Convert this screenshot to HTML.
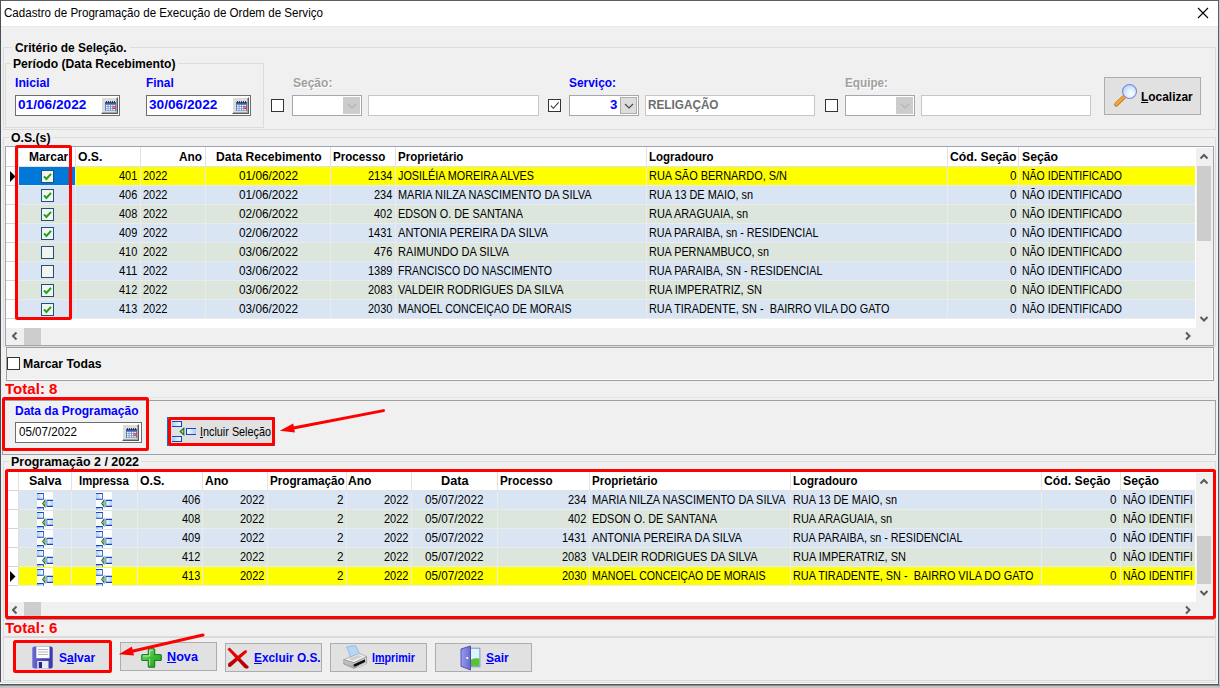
<!DOCTYPE html>
<html lang="pt-BR"><head><meta charset="utf-8"><title>Cadastro de Programação de Execução de Ordem de Serviço</title>
<style>
html,body{margin:0;padding:0}
body{width:1220px;height:688px;position:relative;overflow:hidden;background:#f0f0f0;font-family:"Liberation Sans",sans-serif;}
.a{position:absolute;box-sizing:border-box}
.t{position:absolute;white-space:pre;line-height:16px;transform-origin:0 0;color:#000}
.g{font-size:13px;font-weight:400}
.b{font-size:12px;font-weight:700}
.tt{font-size:12px;font-weight:400}
.T{font-size:14px;font-weight:700}
u{text-decoration:underline;text-underline-offset:1px}
svg{position:absolute;overflow:visible}
</style></head>
<body>
<div class="a" style="left:1px;top:1px;width:1217px;height:25px;background:#fff;"></div>
<div class="a" style="left:1px;top:26px;width:1217px;height:1px;background:#e9e9e9;"></div>
<div class="a" style="left:0px;top:0px;width:1219px;height:1px;background:#5d5d5d;"></div>
<div class="a" style="left:0px;top:0px;width:1px;height:685px;background:#4b5058;"></div>
<div class="a" style="left:1218px;top:0px;width:1px;height:685px;background:#5a5e66;"></div>
<div class="a" style="left:1219px;top:0px;width:1px;height:688px;background:#c4c8ce;"></div>
<div class="a" style="left:0px;top:682px;width:1217px;height:1px;background:#dedede;"></div>
<div class="a" style="left:0px;top:683px;width:1218px;height:1px;background:#f8f8f8;"></div>
<div class="a" style="left:0px;top:684px;width:1219px;height:1px;background:#4a5864;"></div>
<div class="a" style="left:0px;top:685px;width:1220px;height:1px;background:#8c8c8c;"></div>
<div class="a" style="left:0px;top:686px;width:1220px;height:2px;background:#c4c4c4;"></div>
<svg style="left:1197px;top:7px" width="12" height="12" viewBox="0 0 12 12"><path d="M1 1 L11 11 M11 1 L1 11" stroke="#000" stroke-width="1.1" fill="none"/></svg>
<div class="a" style="left:3px;top:47px;width:1213px;height:83px;border:1px solid #dcdcdc;"></div>
<div class="a" style="left:12px;top:40px;width:118px;height:14px;background:#f0f0f0;"></div>
<div class="a" style="left:5px;top:63px;width:259px;height:65px;border:1px solid #dcdcdc;"></div>
<div class="a" style="left:11px;top:56px;width:167px;height:13px;background:#f0f0f0;"></div>
<div class="a" style="left:15px;top:95px;width:105px;height:21px;background:#fff;border:1px solid #6e6e6e;"></div>
<div class="a" style="left:101px;top:97px;width:17px;height:17px;background:#dcdcdc;border-top:1px solid #fff;border-left:1px solid #fff;border-right:1px solid #5a5a5a;border-bottom:1px solid #5a5a5a;box-shadow:inset -1px -1px 0 #a6a6a6;"></div>
<svg style="left:105px;top:101px" width="11" height="10" viewBox="0 0 11 10"><rect x="0" y="1" width="11" height="9" fill="#5f82c6"/><rect x="0" y="1" width="11" height="2.2" fill="#3b5ca6"/><path d="M1.5 0v2M3.5 0v2M5.5 0v2M7.5 0v2M9.5 0v2" stroke="#2b2b2b" stroke-width="0.9"/><g fill="#f4f7fc"><rect x="1" y="3.9" width="1.7" height="1.5"/><rect x="3.4" y="3.9" width="1.7" height="1.5"/><rect x="5.8" y="3.9" width="1.7" height="1.5"/><rect x="8.2" y="3.9" width="1.7" height="1.5"/><rect x="1" y="6" width="1.7" height="1.5"/><rect x="3.4" y="6" width="1.7" height="1.5"/><rect x="5.8" y="6" width="1.7" height="1.5"/><rect x="1" y="8.1" width="1.7" height="1.4"/><rect x="3.4" y="8.1" width="1.7" height="1.4"/><rect x="5.8" y="8.1" width="1.7" height="1.4"/><rect x="8.2" y="8.1" width="1.7" height="1.4"/></g><rect x="7.6" y="5.3" width="2.8" height="2.6" fill="#e8302a"/><rect x="8.5" y="6.1" width="1" height="1" fill="#ffd9d0"/></svg>
<div class="a" style="left:146px;top:95px;width:105px;height:21px;background:#fff;border:1px solid #6e6e6e;"></div>
<div class="a" style="left:232px;top:97px;width:17px;height:17px;background:#dcdcdc;border-top:1px solid #fff;border-left:1px solid #fff;border-right:1px solid #5a5a5a;border-bottom:1px solid #5a5a5a;box-shadow:inset -1px -1px 0 #a6a6a6;"></div>
<svg style="left:236px;top:101px" width="11" height="10" viewBox="0 0 11 10"><rect x="0" y="1" width="11" height="9" fill="#5f82c6"/><rect x="0" y="1" width="11" height="2.2" fill="#3b5ca6"/><path d="M1.5 0v2M3.5 0v2M5.5 0v2M7.5 0v2M9.5 0v2" stroke="#2b2b2b" stroke-width="0.9"/><g fill="#f4f7fc"><rect x="1" y="3.9" width="1.7" height="1.5"/><rect x="3.4" y="3.9" width="1.7" height="1.5"/><rect x="5.8" y="3.9" width="1.7" height="1.5"/><rect x="8.2" y="3.9" width="1.7" height="1.5"/><rect x="1" y="6" width="1.7" height="1.5"/><rect x="3.4" y="6" width="1.7" height="1.5"/><rect x="5.8" y="6" width="1.7" height="1.5"/><rect x="1" y="8.1" width="1.7" height="1.4"/><rect x="3.4" y="8.1" width="1.7" height="1.4"/><rect x="5.8" y="8.1" width="1.7" height="1.4"/><rect x="8.2" y="8.1" width="1.7" height="1.4"/></g><rect x="7.6" y="5.3" width="2.8" height="2.6" fill="#e8302a"/><rect x="8.5" y="6.1" width="1" height="1" fill="#ffd9d0"/></svg>
<div class="a" style="left:271px;top:99px;width:13px;height:13px;background:#fff;border:1px solid #333;"></div>
<div class="a" style="left:292px;top:95px;width:70px;height:21px;background:#fff;border:1px solid #a4a6b2;"></div>
<div class="a" style="left:343px;top:97px;width:17px;height:17px;background:#cccccc;"></div>
<svg style="left:346.5px;top:103px" width="10" height="6" viewBox="0 0 10 6"><path d="M1 1 L5 5 L9 1" stroke="#b4b4b4" stroke-width="1.1" fill="none"/></svg>
<div class="a" style="left:368px;top:95px;width:171px;height:21px;background:#fff;border:1px solid #c6c6c6;"></div>
<div class="a" style="left:548px;top:99px;width:13px;height:13px;background:#fff;border:1px solid #333;"></div>
<svg style="left:548px;top:99px" width="13" height="13" viewBox="0 0 13 13"><path d="M2.8 6.6 L5.4 9.3 L10.6 3.4" stroke="#333" stroke-width="1.1" fill="none"/></svg>
<div class="a" style="left:569px;top:95px;width:70px;height:21px;background:#fff;border:1px solid #a4a6b2;"></div>
<div class="a" style="left:620px;top:97px;width:17px;height:17px;background:#dddddd;border:1px solid #adadad;"></div>
<svg style="left:623.5px;top:103px" width="10" height="6" viewBox="0 0 10 6"><path d="M1 1 L5 5 L9 1" stroke="#444" stroke-width="1.1" fill="none"/></svg>
<div class="a" style="left:645px;top:95px;width:170px;height:21px;background:#fff;border:1px solid #c6c6c6;"></div>
<div class="a" style="left:825px;top:99px;width:13px;height:13px;background:#fff;border:1px solid #333;"></div>
<div class="a" style="left:845px;top:95px;width:70px;height:21px;background:#fff;border:1px solid #a4a6b2;"></div>
<div class="a" style="left:896px;top:97px;width:17px;height:17px;background:#cccccc;"></div>
<svg style="left:899.5px;top:103px" width="10" height="6" viewBox="0 0 10 6"><path d="M1 1 L5 5 L9 1" stroke="#b4b4b4" stroke-width="1.1" fill="none"/></svg>
<div class="a" style="left:921px;top:95px;width:170px;height:21px;background:#fff;border:1px solid #c6c6c6;"></div>
<div class="a" style="left:1104px;top:77px;width:97px;height:38px;background:#e1e1e1;border:1px solid #adadad;"></div>
<svg style="left:1113px;top:83px" width="26" height="24" viewBox="0 0 26 24"><defs><radialGradient id="lens" cx="0.6" cy="0.65" r="0.7"><stop offset="0" stop-color="#ffffff"/><stop offset="0.5" stop-color="#d9ecfc"/><stop offset="1" stop-color="#a9d2f7"/></radialGradient></defs><path d="M10.5 14.5 L3.2 21.6" stroke="#b8741a" stroke-width="4.2" stroke-linecap="round"/><path d="M10.5 14.3 L3.2 21.2" stroke="#f7a637" stroke-width="2.8" stroke-linecap="round"/><circle cx="16.5" cy="8.5" r="7" fill="url(#lens)" stroke="#8286cf" stroke-width="1.1"/></svg>
<div class="a" style="left:3px;top:137px;width:1213px;height:210px;border:1px solid #dcdcdc;"></div>
<div class="a" style="left:9px;top:131px;width:44px;height:12px;background:#f0f0f0;"></div>
<div class="a" style="left:5px;top:146px;width:1209px;height:200px;background:#fff;border:1px solid #a0a4b0;"></div>
<div class="a" style="left:19px;top:167px;width:1176px;height:18px;background:#ffff00;"></div>
<div class="a" style="left:19px;top:167px;width:56px;height:18px;background:#0078d7;"></div>
<div class="a" style="left:6px;top:185px;width:12px;height:1px;background:#d4d4d4;"></div>
<div class="a" style="left:19px;top:185px;width:1176px;height:1px;background:#ebebeb;"></div>
<div class="a" style="left:19px;top:186px;width:1176px;height:18px;background:#d9e5f3;"></div>
<div class="a" style="left:6px;top:204px;width:12px;height:1px;background:#d4d4d4;"></div>
<div class="a" style="left:19px;top:204px;width:1176px;height:1px;background:#ebebeb;"></div>
<div class="a" style="left:19px;top:205px;width:1176px;height:18px;background:#dde6dd;"></div>
<div class="a" style="left:6px;top:223px;width:12px;height:1px;background:#d4d4d4;"></div>
<div class="a" style="left:19px;top:223px;width:1176px;height:1px;background:#ebebeb;"></div>
<div class="a" style="left:19px;top:224px;width:1176px;height:18px;background:#d9e5f3;"></div>
<div class="a" style="left:6px;top:242px;width:12px;height:1px;background:#d4d4d4;"></div>
<div class="a" style="left:19px;top:242px;width:1176px;height:1px;background:#ebebeb;"></div>
<div class="a" style="left:19px;top:243px;width:1176px;height:18px;background:#dde6dd;"></div>
<div class="a" style="left:6px;top:261px;width:12px;height:1px;background:#d4d4d4;"></div>
<div class="a" style="left:19px;top:261px;width:1176px;height:1px;background:#ebebeb;"></div>
<div class="a" style="left:19px;top:262px;width:1176px;height:18px;background:#d9e5f3;"></div>
<div class="a" style="left:6px;top:280px;width:12px;height:1px;background:#d4d4d4;"></div>
<div class="a" style="left:19px;top:280px;width:1176px;height:1px;background:#ebebeb;"></div>
<div class="a" style="left:19px;top:281px;width:1176px;height:18px;background:#dde6dd;"></div>
<div class="a" style="left:6px;top:299px;width:12px;height:1px;background:#d4d4d4;"></div>
<div class="a" style="left:19px;top:299px;width:1176px;height:1px;background:#ebebeb;"></div>
<div class="a" style="left:19px;top:300px;width:1176px;height:18px;background:#d9e5f3;"></div>
<div class="a" style="left:6px;top:318px;width:12px;height:1px;background:#d4d4d4;"></div>
<div class="a" style="left:19px;top:318px;width:1176px;height:1px;background:#ebebeb;"></div>
<div class="a" style="left:6px;top:166px;width:12px;height:1px;background:#d4d4d4;"></div>
<div class="a" style="left:75px;top:167px;width:1px;height:151px;background:#ebebeb;"></div>
<div class="a" style="left:140px;top:167px;width:1px;height:151px;background:#ebebeb;"></div>
<div class="a" style="left:205px;top:167px;width:1px;height:151px;background:#ebebeb;"></div>
<div class="a" style="left:330px;top:167px;width:1px;height:151px;background:#ebebeb;"></div>
<div class="a" style="left:395px;top:167px;width:1px;height:151px;background:#ebebeb;"></div>
<div class="a" style="left:646px;top:167px;width:1px;height:151px;background:#ebebeb;"></div>
<div class="a" style="left:947px;top:167px;width:1px;height:151px;background:#ebebeb;"></div>
<div class="a" style="left:1018px;top:167px;width:1px;height:151px;background:#ebebeb;"></div>
<div class="a" style="left:18px;top:147px;width:1px;height:171px;background:#e0e0e0;"></div>
<div class="a" style="left:75px;top:147px;width:1px;height:19px;background:#e2e2e2;"></div>
<div class="a" style="left:140px;top:147px;width:1px;height:19px;background:#e2e2e2;"></div>
<div class="a" style="left:205px;top:147px;width:1px;height:19px;background:#e2e2e2;"></div>
<div class="a" style="left:330px;top:147px;width:1px;height:19px;background:#e2e2e2;"></div>
<div class="a" style="left:395px;top:147px;width:1px;height:19px;background:#e2e2e2;"></div>
<div class="a" style="left:646px;top:147px;width:1px;height:19px;background:#e2e2e2;"></div>
<div class="a" style="left:947px;top:147px;width:1px;height:19px;background:#e2e2e2;"></div>
<div class="a" style="left:1018px;top:147px;width:1px;height:19px;background:#e2e2e2;"></div>
<div class="a" style="left:18px;top:166px;width:1177px;height:1px;background:#e2e2e2;"></div>
<div class="a" style="left:1196px;top:148px;width:17px;height:180px;background:#f0f0f0;"></div>
<div class="a" style="left:6px;top:328px;width:1207px;height:17px;background:#f0f0f0;"></div>
<div class="a" style="left:1197px;top:166px;width:14px;height:75px;background:#cdcdcd;"></div>
<div class="a" style="left:24px;top:328px;width:17px;height:17px;background:#cdcdcd;"></div>
<svg style="left:1199.0px;top:153.0px" width="10" height="8" viewBox="0 0 10 8"><path d="M1.5 5.5 L5 2 L8.5 5.5" stroke="#5a5a5a" stroke-width="2" fill="none"/></svg>
<svg style="left:1199.0px;top:315.0px" width="10" height="8" viewBox="0 0 10 8"><path d="M1.5 2 L5 5.5 L8.5 2" stroke="#5a5a5a" stroke-width="2" fill="none"/></svg>
<svg style="left:11.0px;top:331.0px" width="8" height="10" viewBox="0 0 8 10"><path d="M5.5 1.5 L2 5 L5.5 8.5" stroke="#5a5a5a" stroke-width="2" fill="none"/></svg>
<svg style="left:1183.5px;top:331.0px" width="8" height="10" viewBox="0 0 8 10"><path d="M2 1.5 L5.5 5 L2 8.5" stroke="#5a5a5a" stroke-width="2" fill="none"/></svg>
<div class="a" style="left:41px;top:170px;width:13px;height:13px;background:#f4f4ee;border:1px solid #1c5180;"></div>
<svg style="left:41px;top:170px" width="13" height="13" viewBox="0 0 13 13"><path d="M3 6.4 L5.4 9 L10 3.8" stroke="#1fa11f" stroke-width="2" fill="none"/></svg>
<div class="a" style="left:41px;top:189px;width:13px;height:13px;background:#f4f4ee;border:1px solid #1c5180;"></div>
<svg style="left:41px;top:189px" width="13" height="13" viewBox="0 0 13 13"><path d="M3 6.4 L5.4 9 L10 3.8" stroke="#1fa11f" stroke-width="2" fill="none"/></svg>
<div class="a" style="left:41px;top:208px;width:13px;height:13px;background:#f4f4ee;border:1px solid #1c5180;"></div>
<svg style="left:41px;top:208px" width="13" height="13" viewBox="0 0 13 13"><path d="M3 6.4 L5.4 9 L10 3.8" stroke="#1fa11f" stroke-width="2" fill="none"/></svg>
<div class="a" style="left:41px;top:227px;width:13px;height:13px;background:#f4f4ee;border:1px solid #1c5180;"></div>
<svg style="left:41px;top:227px" width="13" height="13" viewBox="0 0 13 13"><path d="M3 6.4 L5.4 9 L10 3.8" stroke="#1fa11f" stroke-width="2" fill="none"/></svg>
<div class="a" style="left:41px;top:246px;width:13px;height:13px;background:#f4f4ee;border:1px solid #1c5180;"></div>
<div class="a" style="left:41px;top:265px;width:13px;height:13px;background:#f4f4ee;border:1px solid #1c5180;"></div>
<div class="a" style="left:41px;top:284px;width:13px;height:13px;background:#f4f4ee;border:1px solid #1c5180;"></div>
<svg style="left:41px;top:284px" width="13" height="13" viewBox="0 0 13 13"><path d="M3 6.4 L5.4 9 L10 3.8" stroke="#1fa11f" stroke-width="2" fill="none"/></svg>
<div class="a" style="left:41px;top:303px;width:13px;height:13px;background:#f4f4ee;border:1px solid #1c5180;"></div>
<svg style="left:41px;top:303px" width="13" height="13" viewBox="0 0 13 13"><path d="M3 6.4 L5.4 9 L10 3.8" stroke="#1fa11f" stroke-width="2" fill="none"/></svg>
<svg style="left:10px;top:170.5px" width="6" height="11" viewBox="0 0 6 11"><path d="M0 0 L5.5 5.5 L0 11 Z" fill="#000"/></svg>
<div class="a" style="left:6px;top:347px;width:1208px;height:34px;border:1px solid #a0a0a0;"></div>
<div class="a" style="left:7px;top:379px;width:1206px;height:1px;background:#fff;"></div>
<div class="a" style="left:1212px;top:348px;width:1px;height:32px;background:#fff;"></div>
<div class="a" style="left:7px;top:357px;width:13px;height:13px;background:#fff;border:1px solid #333;"></div>
<div class="a" style="left:2px;top:397px;width:1214px;height:1px;background:#e4e4e4;"></div>
<div class="a" style="left:2px;top:400px;width:1214px;height:55px;border:1px solid #a0a0a0;"></div>
<div class="a" style="left:15px;top:422px;width:127px;height:21px;background:#fff;border:1px solid #6e6e6e;"></div>
<div class="a" style="left:122px;top:424px;width:17px;height:17px;background:#dcdcdc;border-top:1px solid #fff;border-left:1px solid #fff;border-right:1px solid #5a5a5a;border-bottom:1px solid #5a5a5a;box-shadow:inset -1px -1px 0 #a6a6a6;"></div>
<svg style="left:126px;top:428px" width="11" height="10" viewBox="0 0 11 10"><rect x="0" y="1" width="11" height="9" fill="#5f82c6"/><rect x="0" y="1" width="11" height="2.2" fill="#3b5ca6"/><path d="M1.5 0v2M3.5 0v2M5.5 0v2M7.5 0v2M9.5 0v2" stroke="#2b2b2b" stroke-width="0.9"/><g fill="#f4f7fc"><rect x="1" y="3.9" width="1.7" height="1.5"/><rect x="3.4" y="3.9" width="1.7" height="1.5"/><rect x="5.8" y="3.9" width="1.7" height="1.5"/><rect x="8.2" y="3.9" width="1.7" height="1.5"/><rect x="1" y="6" width="1.7" height="1.5"/><rect x="3.4" y="6" width="1.7" height="1.5"/><rect x="5.8" y="6" width="1.7" height="1.5"/><rect x="1" y="8.1" width="1.7" height="1.4"/><rect x="3.4" y="8.1" width="1.7" height="1.4"/><rect x="5.8" y="8.1" width="1.7" height="1.4"/><rect x="8.2" y="8.1" width="1.7" height="1.4"/></g><rect x="7.6" y="5.3" width="2.8" height="2.6" fill="#e8302a"/><rect x="8.5" y="6.1" width="1" height="1" fill="#ffd9d0"/></svg>
<div class="a" style="left:167px;top:417px;width:108px;height:29px;background:#e1e1e1;border:1px solid #0078d7;"></div>
<div class="a" style="left:3px;top:461px;width:1213px;height:176px;border:1px solid #dcdcdc;"></div>
<div class="a" style="left:9px;top:455px;width:132px;height:13px;background:#f0f0f0;"></div>
<div class="a" style="left:6px;top:471px;width:1208px;height:149px;background:#fff;border:1px solid #a0a4b0;"></div>
<div class="a" style="left:19px;top:491px;width:1176px;height:18px;background:#d9e5f3;"></div>
<div class="a" style="left:7px;top:509px;width:11px;height:1px;background:#d4d4d4;"></div>
<div class="a" style="left:19px;top:509px;width:1176px;height:1px;background:#ebebeb;"></div>
<div class="a" style="left:19px;top:510px;width:1176px;height:18px;background:#dde6dd;"></div>
<div class="a" style="left:7px;top:528px;width:11px;height:1px;background:#d4d4d4;"></div>
<div class="a" style="left:19px;top:528px;width:1176px;height:1px;background:#ebebeb;"></div>
<div class="a" style="left:19px;top:529px;width:1176px;height:18px;background:#d9e5f3;"></div>
<div class="a" style="left:7px;top:547px;width:11px;height:1px;background:#d4d4d4;"></div>
<div class="a" style="left:19px;top:547px;width:1176px;height:1px;background:#ebebeb;"></div>
<div class="a" style="left:19px;top:548px;width:1176px;height:18px;background:#dde6dd;"></div>
<div class="a" style="left:7px;top:566px;width:11px;height:1px;background:#d4d4d4;"></div>
<div class="a" style="left:19px;top:566px;width:1176px;height:1px;background:#ebebeb;"></div>
<div class="a" style="left:19px;top:567px;width:1176px;height:18px;background:#ffff00;"></div>
<div class="a" style="left:7px;top:585px;width:11px;height:1px;background:#d4d4d4;"></div>
<div class="a" style="left:19px;top:585px;width:1176px;height:1px;background:#ebebeb;"></div>
<div class="a" style="left:7px;top:490px;width:11px;height:1px;background:#d4d4d4;"></div>
<div class="a" style="left:71px;top:491px;width:1px;height:94px;background:#ebebeb;"></div>
<div class="a" style="left:137px;top:491px;width:1px;height:94px;background:#ebebeb;"></div>
<div class="a" style="left:202px;top:491px;width:1px;height:94px;background:#ebebeb;"></div>
<div class="a" style="left:267px;top:491px;width:1px;height:94px;background:#ebebeb;"></div>
<div class="a" style="left:346px;top:491px;width:1px;height:94px;background:#ebebeb;"></div>
<div class="a" style="left:411px;top:491px;width:1px;height:94px;background:#ebebeb;"></div>
<div class="a" style="left:497px;top:491px;width:1px;height:94px;background:#ebebeb;"></div>
<div class="a" style="left:589px;top:491px;width:1px;height:94px;background:#ebebeb;"></div>
<div class="a" style="left:790px;top:491px;width:1px;height:94px;background:#ebebeb;"></div>
<div class="a" style="left:1041px;top:491px;width:1px;height:94px;background:#ebebeb;"></div>
<div class="a" style="left:1120px;top:491px;width:1px;height:94px;background:#ebebeb;"></div>
<div class="a" style="left:18px;top:472px;width:1px;height:113px;background:#e0e0e0;"></div>
<div class="a" style="left:71px;top:472px;width:1px;height:18px;background:#e2e2e2;"></div>
<div class="a" style="left:137px;top:472px;width:1px;height:18px;background:#e2e2e2;"></div>
<div class="a" style="left:202px;top:472px;width:1px;height:18px;background:#e2e2e2;"></div>
<div class="a" style="left:267px;top:472px;width:1px;height:18px;background:#e2e2e2;"></div>
<div class="a" style="left:346px;top:472px;width:1px;height:18px;background:#e2e2e2;"></div>
<div class="a" style="left:411px;top:472px;width:1px;height:18px;background:#e2e2e2;"></div>
<div class="a" style="left:497px;top:472px;width:1px;height:18px;background:#e2e2e2;"></div>
<div class="a" style="left:589px;top:472px;width:1px;height:18px;background:#e2e2e2;"></div>
<div class="a" style="left:790px;top:472px;width:1px;height:18px;background:#e2e2e2;"></div>
<div class="a" style="left:1041px;top:472px;width:1px;height:18px;background:#e2e2e2;"></div>
<div class="a" style="left:1120px;top:472px;width:1px;height:18px;background:#e2e2e2;"></div>
<div class="a" style="left:18px;top:490px;width:1177px;height:1px;background:#e2e2e2;"></div>
<div class="a" style="left:1196px;top:473px;width:17px;height:129px;background:#f0f0f0;"></div>
<div class="a" style="left:7px;top:602px;width:1206px;height:17px;background:#f0f0f0;"></div>
<div class="a" style="left:1197px;top:536px;width:14px;height:48px;background:#cdcdcd;"></div>
<div class="a" style="left:24px;top:602px;width:17px;height:17px;background:#cdcdcd;"></div>
<svg style="left:1199.0px;top:478.0px" width="10" height="8" viewBox="0 0 10 8"><path d="M1.5 5.5 L5 2 L8.5 5.5" stroke="#5a5a5a" stroke-width="2" fill="none"/></svg>
<svg style="left:1199.0px;top:589.0px" width="10" height="8" viewBox="0 0 10 8"><path d="M1.5 2 L5 5.5 L8.5 2" stroke="#5a5a5a" stroke-width="2" fill="none"/></svg>
<svg style="left:11.0px;top:605.0px" width="8" height="10" viewBox="0 0 8 10"><path d="M5.5 1.5 L2 5 L5.5 8.5" stroke="#5a5a5a" stroke-width="2" fill="none"/></svg>
<svg style="left:1183.5px;top:605.0px" width="8" height="10" viewBox="0 0 8 10"><path d="M2 1.5 L5.5 5 L2 8.5" stroke="#5a5a5a" stroke-width="2" fill="none"/></svg>
<svg style="left:10px;top:570.5px" width="6" height="11" viewBox="0 0 6 11"><path d="M0 0 L5.5 5.5 L0 11 Z" fill="#000"/></svg>
<div class="a" style="left:3px;top:637px;width:1213px;height:44px;border:1px solid #d9d9d9;"></div>
<div class="a" style="left:14px;top:642px;width:97px;height:29px;background:#e1e1e1;border:1px solid #adadad;"></div>
<div class="a" style="left:120px;top:642px;width:97px;height:29px;background:#e1e1e1;border:1px solid #adadad;"></div>
<div class="a" style="left:225px;top:643px;width:97px;height:29px;background:#e1e1e1;border:1px solid #adadad;"></div>
<div class="a" style="left:330px;top:643px;width:97px;height:29px;background:#e1e1e1;border:1px solid #adadad;"></div>
<div class="a" style="left:435px;top:643px;width:97px;height:29px;background:#e1e1e1;border:1px solid #adadad;"></div>
<div class="a" style="left:172px;top:421px;width:24px;height:21px;overflow:hidden"><svg style="left:0;top:0" width="24" height="21" viewBox="0 0 24 21" preserveAspectRatio="none"><defs><linearGradient id="pg" x1="0" x2="1"><stop offset="0" stop-color="#a9cbf5"/><stop offset="1" stop-color="#ffffff"/></linearGradient><linearGradient id="pg2" x1="0" x2="1"><stop offset="0" stop-color="#ffffff"/><stop offset="1" stop-color="#a9cbf5"/></linearGradient></defs><path d="M0 0.5 H9.5 V5.5 H0" fill="url(#pg)" stroke="#1446c8" stroke-width="1.1"/><path d="M24 7.5 H14.5 V13.5 H24" fill="url(#pg2)" stroke="#1446c8" stroke-width="1.1"/><path d="M0 15.5 H9.5 V20.5 H0" fill="url(#pg)" stroke="#1446c8" stroke-width="1.1"/><path d="M11.8 7.2 V13.8 L8.2 10.5 Z" fill="#a6dca6" stroke="#176a17" stroke-width="1.1"/></svg></div>
<div class="a" style="left:36.8px;top:492px;width:16.4px;height:18px;background:#fff"></div><div class="a" style="left:36.8px;top:493px;width:16.4px;height:17px;overflow:hidden"><svg style="left:0;top:0" width="16.4" height="21" viewBox="0 0 24 21" preserveAspectRatio="none"><defs><linearGradient id="pg" x1="0" x2="1"><stop offset="0" stop-color="#a9cbf5"/><stop offset="1" stop-color="#ffffff"/></linearGradient><linearGradient id="pg2" x1="0" x2="1"><stop offset="0" stop-color="#ffffff"/><stop offset="1" stop-color="#a9cbf5"/></linearGradient></defs><path d="M0 0.5 H9.5 V6.2 H0" fill="url(#pg)" stroke="#1446c8" stroke-width="1.1"/><path d="M24 7.4 H14.5 V13.4 H24" fill="url(#pg2)" stroke="#1446c8" stroke-width="1.1"/><path d="M0 14.6 H9.5 V20.5 H0" fill="url(#pg)" stroke="#1446c8" stroke-width="1.1"/><path d="M11.8 7.1000000000000005 V13.700000000000001 L8.2 10.4 Z" fill="#a6dca6" stroke="#176a17" stroke-width="1.1"/></svg></div>
<div class="a" style="left:95.8px;top:492px;width:16.4px;height:18px;background:#fff"></div><div class="a" style="left:95.8px;top:493px;width:16.4px;height:17px;overflow:hidden"><svg style="left:0;top:0" width="16.4" height="21" viewBox="0 0 24 21" preserveAspectRatio="none"><defs><linearGradient id="pg" x1="0" x2="1"><stop offset="0" stop-color="#a9cbf5"/><stop offset="1" stop-color="#ffffff"/></linearGradient><linearGradient id="pg2" x1="0" x2="1"><stop offset="0" stop-color="#ffffff"/><stop offset="1" stop-color="#a9cbf5"/></linearGradient></defs><path d="M0 0.5 H9.5 V6.2 H0" fill="url(#pg)" stroke="#1446c8" stroke-width="1.1"/><path d="M24 7.4 H14.5 V13.4 H24" fill="url(#pg2)" stroke="#1446c8" stroke-width="1.1"/><path d="M0 14.6 H9.5 V20.5 H0" fill="url(#pg)" stroke="#1446c8" stroke-width="1.1"/><path d="M11.8 7.1000000000000005 V13.700000000000001 L8.2 10.4 Z" fill="#a6dca6" stroke="#176a17" stroke-width="1.1"/></svg></div>
<div class="a" style="left:36.8px;top:511px;width:16.4px;height:18px;background:#fff"></div><div class="a" style="left:36.8px;top:512px;width:16.4px;height:17px;overflow:hidden"><svg style="left:0;top:0" width="16.4" height="21" viewBox="0 0 24 21" preserveAspectRatio="none"><defs><linearGradient id="pg" x1="0" x2="1"><stop offset="0" stop-color="#a9cbf5"/><stop offset="1" stop-color="#ffffff"/></linearGradient><linearGradient id="pg2" x1="0" x2="1"><stop offset="0" stop-color="#ffffff"/><stop offset="1" stop-color="#a9cbf5"/></linearGradient></defs><path d="M0 0.5 H9.5 V6.2 H0" fill="url(#pg)" stroke="#1446c8" stroke-width="1.1"/><path d="M24 7.4 H14.5 V13.4 H24" fill="url(#pg2)" stroke="#1446c8" stroke-width="1.1"/><path d="M0 14.6 H9.5 V20.5 H0" fill="url(#pg)" stroke="#1446c8" stroke-width="1.1"/><path d="M11.8 7.1000000000000005 V13.700000000000001 L8.2 10.4 Z" fill="#a6dca6" stroke="#176a17" stroke-width="1.1"/></svg></div>
<div class="a" style="left:95.8px;top:511px;width:16.4px;height:18px;background:#fff"></div><div class="a" style="left:95.8px;top:512px;width:16.4px;height:17px;overflow:hidden"><svg style="left:0;top:0" width="16.4" height="21" viewBox="0 0 24 21" preserveAspectRatio="none"><defs><linearGradient id="pg" x1="0" x2="1"><stop offset="0" stop-color="#a9cbf5"/><stop offset="1" stop-color="#ffffff"/></linearGradient><linearGradient id="pg2" x1="0" x2="1"><stop offset="0" stop-color="#ffffff"/><stop offset="1" stop-color="#a9cbf5"/></linearGradient></defs><path d="M0 0.5 H9.5 V6.2 H0" fill="url(#pg)" stroke="#1446c8" stroke-width="1.1"/><path d="M24 7.4 H14.5 V13.4 H24" fill="url(#pg2)" stroke="#1446c8" stroke-width="1.1"/><path d="M0 14.6 H9.5 V20.5 H0" fill="url(#pg)" stroke="#1446c8" stroke-width="1.1"/><path d="M11.8 7.1000000000000005 V13.700000000000001 L8.2 10.4 Z" fill="#a6dca6" stroke="#176a17" stroke-width="1.1"/></svg></div>
<div class="a" style="left:36.8px;top:530px;width:16.4px;height:18px;background:#fff"></div><div class="a" style="left:36.8px;top:531px;width:16.4px;height:17px;overflow:hidden"><svg style="left:0;top:0" width="16.4" height="21" viewBox="0 0 24 21" preserveAspectRatio="none"><defs><linearGradient id="pg" x1="0" x2="1"><stop offset="0" stop-color="#a9cbf5"/><stop offset="1" stop-color="#ffffff"/></linearGradient><linearGradient id="pg2" x1="0" x2="1"><stop offset="0" stop-color="#ffffff"/><stop offset="1" stop-color="#a9cbf5"/></linearGradient></defs><path d="M0 0.5 H9.5 V6.2 H0" fill="url(#pg)" stroke="#1446c8" stroke-width="1.1"/><path d="M24 7.4 H14.5 V13.4 H24" fill="url(#pg2)" stroke="#1446c8" stroke-width="1.1"/><path d="M0 14.6 H9.5 V20.5 H0" fill="url(#pg)" stroke="#1446c8" stroke-width="1.1"/><path d="M11.8 7.1000000000000005 V13.700000000000001 L8.2 10.4 Z" fill="#a6dca6" stroke="#176a17" stroke-width="1.1"/></svg></div>
<div class="a" style="left:95.8px;top:530px;width:16.4px;height:18px;background:#fff"></div><div class="a" style="left:95.8px;top:531px;width:16.4px;height:17px;overflow:hidden"><svg style="left:0;top:0" width="16.4" height="21" viewBox="0 0 24 21" preserveAspectRatio="none"><defs><linearGradient id="pg" x1="0" x2="1"><stop offset="0" stop-color="#a9cbf5"/><stop offset="1" stop-color="#ffffff"/></linearGradient><linearGradient id="pg2" x1="0" x2="1"><stop offset="0" stop-color="#ffffff"/><stop offset="1" stop-color="#a9cbf5"/></linearGradient></defs><path d="M0 0.5 H9.5 V6.2 H0" fill="url(#pg)" stroke="#1446c8" stroke-width="1.1"/><path d="M24 7.4 H14.5 V13.4 H24" fill="url(#pg2)" stroke="#1446c8" stroke-width="1.1"/><path d="M0 14.6 H9.5 V20.5 H0" fill="url(#pg)" stroke="#1446c8" stroke-width="1.1"/><path d="M11.8 7.1000000000000005 V13.700000000000001 L8.2 10.4 Z" fill="#a6dca6" stroke="#176a17" stroke-width="1.1"/></svg></div>
<div class="a" style="left:36.8px;top:549px;width:16.4px;height:18px;background:#fff"></div><div class="a" style="left:36.8px;top:550px;width:16.4px;height:17px;overflow:hidden"><svg style="left:0;top:0" width="16.4" height="21" viewBox="0 0 24 21" preserveAspectRatio="none"><defs><linearGradient id="pg" x1="0" x2="1"><stop offset="0" stop-color="#a9cbf5"/><stop offset="1" stop-color="#ffffff"/></linearGradient><linearGradient id="pg2" x1="0" x2="1"><stop offset="0" stop-color="#ffffff"/><stop offset="1" stop-color="#a9cbf5"/></linearGradient></defs><path d="M0 0.5 H9.5 V6.2 H0" fill="url(#pg)" stroke="#1446c8" stroke-width="1.1"/><path d="M24 7.4 H14.5 V13.4 H24" fill="url(#pg2)" stroke="#1446c8" stroke-width="1.1"/><path d="M0 14.6 H9.5 V20.5 H0" fill="url(#pg)" stroke="#1446c8" stroke-width="1.1"/><path d="M11.8 7.1000000000000005 V13.700000000000001 L8.2 10.4 Z" fill="#a6dca6" stroke="#176a17" stroke-width="1.1"/></svg></div>
<div class="a" style="left:95.8px;top:549px;width:16.4px;height:18px;background:#fff"></div><div class="a" style="left:95.8px;top:550px;width:16.4px;height:17px;overflow:hidden"><svg style="left:0;top:0" width="16.4" height="21" viewBox="0 0 24 21" preserveAspectRatio="none"><defs><linearGradient id="pg" x1="0" x2="1"><stop offset="0" stop-color="#a9cbf5"/><stop offset="1" stop-color="#ffffff"/></linearGradient><linearGradient id="pg2" x1="0" x2="1"><stop offset="0" stop-color="#ffffff"/><stop offset="1" stop-color="#a9cbf5"/></linearGradient></defs><path d="M0 0.5 H9.5 V6.2 H0" fill="url(#pg)" stroke="#1446c8" stroke-width="1.1"/><path d="M24 7.4 H14.5 V13.4 H24" fill="url(#pg2)" stroke="#1446c8" stroke-width="1.1"/><path d="M0 14.6 H9.5 V20.5 H0" fill="url(#pg)" stroke="#1446c8" stroke-width="1.1"/><path d="M11.8 7.1000000000000005 V13.700000000000001 L8.2 10.4 Z" fill="#a6dca6" stroke="#176a17" stroke-width="1.1"/></svg></div>
<div class="a" style="left:36.8px;top:568px;width:16.4px;height:18px;background:#fff"></div><div class="a" style="left:36.8px;top:569px;width:16.4px;height:17px;overflow:hidden"><svg style="left:0;top:0" width="16.4" height="21" viewBox="0 0 24 21" preserveAspectRatio="none"><defs><linearGradient id="pg" x1="0" x2="1"><stop offset="0" stop-color="#a9cbf5"/><stop offset="1" stop-color="#ffffff"/></linearGradient><linearGradient id="pg2" x1="0" x2="1"><stop offset="0" stop-color="#ffffff"/><stop offset="1" stop-color="#a9cbf5"/></linearGradient></defs><path d="M0 0.5 H9.5 V6.2 H0" fill="url(#pg)" stroke="#1446c8" stroke-width="1.1"/><path d="M24 7.4 H14.5 V13.4 H24" fill="url(#pg2)" stroke="#1446c8" stroke-width="1.1"/><path d="M0 14.6 H9.5 V20.5 H0" fill="url(#pg)" stroke="#1446c8" stroke-width="1.1"/><path d="M11.8 7.1000000000000005 V13.700000000000001 L8.2 10.4 Z" fill="#a6dca6" stroke="#176a17" stroke-width="1.1"/></svg></div>
<div class="a" style="left:95.8px;top:568px;width:16.4px;height:18px;background:#fff"></div><div class="a" style="left:95.8px;top:569px;width:16.4px;height:17px;overflow:hidden"><svg style="left:0;top:0" width="16.4" height="21" viewBox="0 0 24 21" preserveAspectRatio="none"><defs><linearGradient id="pg" x1="0" x2="1"><stop offset="0" stop-color="#a9cbf5"/><stop offset="1" stop-color="#ffffff"/></linearGradient><linearGradient id="pg2" x1="0" x2="1"><stop offset="0" stop-color="#ffffff"/><stop offset="1" stop-color="#a9cbf5"/></linearGradient></defs><path d="M0 0.5 H9.5 V6.2 H0" fill="url(#pg)" stroke="#1446c8" stroke-width="1.1"/><path d="M24 7.4 H14.5 V13.4 H24" fill="url(#pg2)" stroke="#1446c8" stroke-width="1.1"/><path d="M0 14.6 H9.5 V20.5 H0" fill="url(#pg)" stroke="#1446c8" stroke-width="1.1"/><path d="M11.8 7.1000000000000005 V13.700000000000001 L8.2 10.4 Z" fill="#a6dca6" stroke="#176a17" stroke-width="1.1"/></svg></div>
<svg style="left:32px;top:646px" width="21" height="23" viewBox="0 0 21 23"><defs><linearGradient id="fl" x1="0" x2="1"><stop offset="0" stop-color="#6a6ad6"/><stop offset="0.5" stop-color="#4848b8"/><stop offset="1" stop-color="#3a3aa6"/></linearGradient></defs><rect x="0.3" y="0.6" width="20.4" height="22" rx="2" fill="url(#fl)"/><rect x="4.3" y="0.6" width="13.2" height="11.6" fill="#fdfdfd"/><path d="M6 3.5h10M6 6h10M6 8.5h10" stroke="#b8b8b8" stroke-width="1"/><rect x="5.3" y="15" width="11.2" height="7.6" fill="#e9e9f3"/><rect x="6.8" y="16" width="3.2" height="6" fill="#26267e"/></svg>
<svg style="left:140.5px;top:647.5px" width="21" height="20" viewBox="0 0 21 20"><defs><linearGradient id="gp" x1="0" y1="0" x2="1" y2="1"><stop offset="0" stop-color="#7fdc78"/><stop offset="0.5" stop-color="#3dbb38"/><stop offset="1" stop-color="#249c24"/></linearGradient></defs><path d="M8.3 0.7 H12.7 Q13.7 0.7 13.7 1.7 V6.5 H19.3 Q20.3 6.5 20.3 7.5 V11.5 Q20.3 12.5 19.3 12.5 H13.7 V18.3 Q13.7 19.3 12.7 19.3 H8.3 Q7.3 19.3 7.3 18.3 V12.5 H1.7 Q0.7 12.5 0.7 11.5 V7.5 Q0.7 6.5 1.7 6.5 H7.3 V1.7 Q7.3 0.7 8.3 0.7 Z" fill="url(#gp)" stroke="#1b7d1b" stroke-width="1.1"/><path d="M8.7 17.5 V11.2 M2.2 8 H8.7 V2.2 H12" fill="none" stroke="#d9f7d5" stroke-width="0.9" opacity="0.85"/></svg>
<svg style="left:227px;top:647px" width="23" height="23" viewBox="0 0 23 23"><defs><linearGradient id="xg" gradientUnits="userSpaceOnUse" x1="0" y1="1" x2="0" y2="22"><stop offset="0" stop-color="#f40000"/><stop offset="0.45" stop-color="#e00000"/><stop offset="0.6" stop-color="#bc0000"/><stop offset="1" stop-color="#b00000"/></linearGradient></defs><path d="M0.4 2.2 L2.6 0.6 L22 20 L20.2 21.8 L17.6 21 Z" fill="url(#xg)"/><path d="M19.4 3 L20 5.2 L3.4 20 L1 19.6 L1.2 16.6 L17.6 3.6 Z" fill="url(#xg)"/></svg>
<svg style="left:343px;top:645px" width="25" height="24" viewBox="0 0 25 24"><defs><linearGradient id="prf" x1="0" y1="0" x2="0" y2="1"><stop offset="0" stop-color="#d8d8d8"/><stop offset="1" stop-color="#a8a8a8"/></linearGradient></defs><path d="M3.4 2.2 Q7.5 0.2 12.8 0.9 L17 9.6 L7.2 12 Q6.6 6.2 3.4 2.2 Z" fill="#b6d6f8" stroke="#86aee0" stroke-width="0.7"/><path d="M0.8 14.6 L16.4 8.4 L23.6 11.6 L11 17.8 Z" fill="#f2f2f2" stroke="#a0a0a0" stroke-width="0.7"/><path d="M5.5 13.8 L16 9.8 L19.6 11.4 L9.3 15.8 Z" fill="#cfcfcf"/><path d="M0.8 14.6 L11 17.8 L23.6 11.6 L23.6 17.6 L11 23.4 L0.8 19 Z" fill="url(#prf)" stroke="#8e8e8e" stroke-width="0.7"/><path d="M10.6 19.4 L22 14.2 L22 17 L12.6 21.6 L10.6 21.4 Z" fill="#0c0c0c"/><path d="M14.5 21.2 L22.6 17.4 L24 18.4 L16.5 22.2 Z" fill="#e4e4e4" stroke="#9a9a9a" stroke-width="0.5"/></svg>
<svg style="left:460px;top:645px" width="21" height="26" viewBox="0 0 21 26"><defs><linearGradient id="dr" x1="0" x2="1"><stop offset="0" stop-color="#9a9af0"/><stop offset="1" stop-color="#6a6ad0"/></linearGradient></defs><rect x="10.5" y="3.2" width="9.4" height="18.6" fill="#d8f6fb" stroke="#8c8cd6" stroke-width="1"/><path d="M11 14.5 Q15 12.5 19.4 13.6 V21.3 H11 Z" fill="#58c238"/><path d="M1 4 L10.5 1 V25 L1 21.3 Z" fill="url(#dr)" stroke="#4a4aae" stroke-width="0.9"/><circle cx="7.3" cy="13" r="1.1" fill="#fff"/></svg>
<div class="a" style="left:15px;top:145px;width:57px;height:175px;border:3px solid #ff0000;border-radius:2.5px;"></div>
<div class="a" style="left:2px;top:397px;width:147px;height:54px;border:3px solid #ff0000;border-radius:2.5px;"></div>
<div class="a" style="left:168px;top:417px;width:107px;height:29px;border:3px solid #ff0000;border-radius:2.5px;"></div>
<div class="a" style="left:5px;top:469px;width:1211px;height:150px;border:3px solid #ff0000;border-radius:2.5px;"></div>
<div class="a" style="left:13px;top:640px;width:99px;height:33px;border:3px solid #ff0000;border-radius:2.5px;"></div>
<svg style="left:0;top:0" width="1220" height="688" viewBox="0 0 1220 688"><path d="M383.5 410.6 L292.1 428.3" stroke="#ff0000" stroke-width="3" stroke-linecap="round"/><path d="M279.8 430.7 L293.2 423.4 L294.9 432.5 Z" fill="#ff0000"/></svg>
<svg style="left:0;top:0" width="1220" height="688" viewBox="0 0 1220 688"><path d="M203.0 635.0 L131.0 651.5" stroke="#ff0000" stroke-width="3" stroke-linecap="round"/><path d="M118.8 654.3 L131.9 646.6 L134.0 655.5 Z" fill="#ff0000"/></svg>
<span class="t tt" style="left:3.80px;top:5.03px;transform:scaleX(0.9661);">Cadastro de Programação de Execução de Ordem de Serviço</span>
<span class="t b" style="left:15.00px;top:40.03px;transform:scaleX(0.9951);">Critério de Seleção.</span>
<span class="t b" style="left:13.00px;top:56.03px;transform:scaleX(1.0112);">Período (Data Recebimento)</span>
<span class="t b" style="left:15.20px;top:75.03px;transform:scaleX(1.0172);color:#0000ff;">Inicial</span>
<span class="t b" style="left:146.00px;top:75.03px;transform:scaleX(0.9923);color:#0000ff;">Final</span>
<span class="t b" style="left:18.30px;top:97.03px;transform:scaleX(1.1388);color:#0000ff;">01/06/2022</span>
<span class="t b" style="left:149.30px;top:97.03px;transform:scaleX(1.1388);color:#0000ff;">30/06/2022</span>
<span class="t b" style="left:292.50px;top:75.03px;transform:scaleX(1.0010);color:#a0a0a0;text-shadow:1px 1px 0 #fff;">Seção:</span>
<span class="t b" style="left:569.00px;top:75.03px;transform:scaleX(0.9924);color:#0000ff;">Serviço:</span>
<span class="t b" style="left:610.30px;top:97.03px;transform:scaleX(1.1065);color:#0000ff;">3</span>
<span class="t b" style="left:647.50px;top:97.03px;transform:scaleX(0.9792);color:#6d6d6d;">RELIGAÇÃO</span>
<span class="t b" style="left:845.00px;top:75.03px;transform:scaleX(0.9773);color:#a0a0a0;text-shadow:1px 1px 0 #fff;">Equipe:</span>
<span class="t b" style="left:1140.80px;top:88.53px;transform:scaleX(0.9936);"><u>L</u>ocalizar</span>
<span class="t b" style="left:11.00px;top:130.03px;transform:scaleX(1.0214);">O.S.(s)</span>
<span class="t b" style="left:28.50px;top:149.03px;transform:scaleX(0.9960);">Marcar</span>
<span class="t b" style="left:78.40px;top:149.03px;transform:scaleX(1.0160);">O.S.</span>
<span class="t b" style="left:178.50px;top:149.03px;transform:scaleX(0.9859);">Ano</span>
<span class="t b" style="left:215.80px;top:149.03px;transform:scaleX(1.0095);">Data Recebimento</span>
<span class="t b" style="left:333.20px;top:149.03px;transform:scaleX(0.9680);">Processo</span>
<span class="t b" style="left:398.10px;top:149.03px;transform:scaleX(0.9615);">Proprietário</span>
<span class="t b" style="left:649.00px;top:149.03px;transform:scaleX(0.9580);">Logradouro</span>
<span class="t b" style="left:950.00px;top:149.03px;transform:scaleX(1.0175);">Cód. Seção</span>
<span class="t b" style="left:1021.50px;top:149.03px;transform:scaleX(1.0181);">Seção</span>
<span class="t g" style="left:119.20px;top:168.20px;transform:scaleX(0.8432);">401</span>
<span class="t g" style="left:143.00px;top:168.20px;transform:scaleX(0.8471);">2022</span>
<span class="t g" style="left:239.00px;top:168.20px;transform:scaleX(0.9066);">01/06/2022</span>
<span class="t g" style="left:368.00px;top:168.20px;transform:scaleX(0.8471);">2134</span>
<span class="t g" style="left:397.50px;top:168.20px;transform:scaleX(0.8304);">JOSILÉIA MOREIRA ALVES</span>
<span class="t g" style="left:649.00px;top:168.20px;transform:scaleX(0.8415);">RUA SÃO BERNARDO, S/N</span>
<span class="t g" style="left:1009.50px;top:168.20px;transform:scaleX(0.8985);">0</span>
<span class="t g" style="left:1021.50px;top:168.20px;transform:scaleX(0.8096);">NÃO IDENTIFICADO</span>
<span class="t g" style="left:119.20px;top:187.20px;transform:scaleX(0.8432);">406</span>
<span class="t g" style="left:143.00px;top:187.20px;transform:scaleX(0.8471);">2022</span>
<span class="t g" style="left:239.00px;top:187.20px;transform:scaleX(0.9066);">01/06/2022</span>
<span class="t g" style="left:374.20px;top:187.20px;transform:scaleX(0.8432);">234</span>
<span class="t g" style="left:397.50px;top:187.20px;transform:scaleX(0.8423);">MARIA NILZA NASCIMENTO DA SILVA</span>
<span class="t g" style="left:649.00px;top:187.20px;transform:scaleX(0.8369);">RUA 13 DE MAIO, sn</span>
<span class="t g" style="left:1009.50px;top:187.20px;transform:scaleX(0.8985);">0</span>
<span class="t g" style="left:1021.50px;top:187.20px;transform:scaleX(0.8096);">NÃO IDENTIFICADO</span>
<span class="t g" style="left:119.20px;top:206.20px;transform:scaleX(0.8432);">408</span>
<span class="t g" style="left:143.00px;top:206.20px;transform:scaleX(0.8471);">2022</span>
<span class="t g" style="left:239.00px;top:206.20px;transform:scaleX(0.9066);">02/06/2022</span>
<span class="t g" style="left:374.20px;top:206.20px;transform:scaleX(0.8432);">402</span>
<span class="t g" style="left:397.50px;top:206.20px;transform:scaleX(0.8373);">EDSON O. DE SANTANA</span>
<span class="t g" style="left:649.00px;top:206.20px;transform:scaleX(0.8407);">RUA ARAGUAIA, sn</span>
<span class="t g" style="left:1009.50px;top:206.20px;transform:scaleX(0.8985);">0</span>
<span class="t g" style="left:1021.50px;top:206.20px;transform:scaleX(0.8096);">NÃO IDENTIFICADO</span>
<span class="t g" style="left:119.20px;top:225.20px;transform:scaleX(0.8432);">409</span>
<span class="t g" style="left:143.00px;top:225.20px;transform:scaleX(0.8471);">2022</span>
<span class="t g" style="left:239.00px;top:225.20px;transform:scaleX(0.9066);">02/06/2022</span>
<span class="t g" style="left:368.00px;top:225.20px;transform:scaleX(0.8471);">1431</span>
<span class="t g" style="left:397.50px;top:225.20px;transform:scaleX(0.8508);">ANTONIA PEREIRA DA SILVA</span>
<span class="t g" style="left:649.00px;top:225.20px;transform:scaleX(0.8271);">RUA PARAIBA, sn - RESIDENCIAL</span>
<span class="t g" style="left:1009.50px;top:225.20px;transform:scaleX(0.8985);">0</span>
<span class="t g" style="left:1021.50px;top:225.20px;transform:scaleX(0.8096);">NÃO IDENTIFICADO</span>
<span class="t g" style="left:119.20px;top:244.20px;transform:scaleX(0.8432);">410</span>
<span class="t g" style="left:143.00px;top:244.20px;transform:scaleX(0.8471);">2022</span>
<span class="t g" style="left:239.00px;top:244.20px;transform:scaleX(0.9066);">03/06/2022</span>
<span class="t g" style="left:374.20px;top:244.20px;transform:scaleX(0.8432);">476</span>
<span class="t g" style="left:397.50px;top:244.20px;transform:scaleX(0.8520);">RAIMUNDO DA SILVA</span>
<span class="t g" style="left:649.00px;top:244.20px;transform:scaleX(0.8305);">RUA PERNAMBUCO, sn</span>
<span class="t g" style="left:1009.50px;top:244.20px;transform:scaleX(0.8985);">0</span>
<span class="t g" style="left:1021.50px;top:244.20px;transform:scaleX(0.8096);">NÃO IDENTIFICADO</span>
<span class="t g" style="left:119.20px;top:263.20px;transform:scaleX(0.8826);">411</span>
<span class="t g" style="left:143.00px;top:263.20px;transform:scaleX(0.8471);">2022</span>
<span class="t g" style="left:239.00px;top:263.20px;transform:scaleX(0.9066);">03/06/2022</span>
<span class="t g" style="left:368.00px;top:263.20px;transform:scaleX(0.8471);">1389</span>
<span class="t g" style="left:397.50px;top:263.20px;transform:scaleX(0.8117);">FRANCISCO DO NASCIMENTO</span>
<span class="t g" style="left:649.00px;top:263.20px;transform:scaleX(0.8291);">RUA PARAIBA, SN - RESIDENCIAL</span>
<span class="t g" style="left:1009.50px;top:263.20px;transform:scaleX(0.8985);">0</span>
<span class="t g" style="left:1021.50px;top:263.20px;transform:scaleX(0.8096);">NÃO IDENTIFICADO</span>
<span class="t g" style="left:119.20px;top:282.20px;transform:scaleX(0.8432);">412</span>
<span class="t g" style="left:143.00px;top:282.20px;transform:scaleX(0.8471);">2022</span>
<span class="t g" style="left:239.00px;top:282.20px;transform:scaleX(0.9066);">03/06/2022</span>
<span class="t g" style="left:368.00px;top:282.20px;transform:scaleX(0.8471);">2083</span>
<span class="t g" style="left:397.50px;top:282.20px;transform:scaleX(0.8422);">VALDEIR RODRIGUES DA SILVA</span>
<span class="t g" style="left:649.00px;top:282.20px;transform:scaleX(0.8471);">RUA IMPERATRIZ, SN</span>
<span class="t g" style="left:1009.50px;top:282.20px;transform:scaleX(0.8985);">0</span>
<span class="t g" style="left:1021.50px;top:282.20px;transform:scaleX(0.8096);">NÃO IDENTIFICADO</span>
<span class="t g" style="left:119.20px;top:301.20px;transform:scaleX(0.8432);">413</span>
<span class="t g" style="left:143.00px;top:301.20px;transform:scaleX(0.8471);">2022</span>
<span class="t g" style="left:239.00px;top:301.20px;transform:scaleX(0.9066);">03/06/2022</span>
<span class="t g" style="left:368.00px;top:301.20px;transform:scaleX(0.8471);">2030</span>
<span class="t g" style="left:397.50px;top:301.20px;transform:scaleX(0.8133);">MANOEL CONCEIÇAO DE MORAIS</span>
<span class="t g" style="left:649.00px;top:301.20px;transform:scaleX(0.8365);">RUA TIRADENTE, SN -  BAIRRO VILA DO GATO</span>
<span class="t g" style="left:1009.50px;top:301.20px;transform:scaleX(0.8985);">0</span>
<span class="t g" style="left:1021.50px;top:301.20px;transform:scaleX(0.8096);">NÃO IDENTIFICADO</span>
<span class="t b" style="left:23.10px;top:356.03px;transform:scaleX(1.0176);">Marcar Todas</span>
<span class="t T" style="left:4.70px;top:381.37px;transform:scaleX(1.0769);color:#ff0000;">Total: 8</span>
<span class="t b" style="left:15.00px;top:402.53px;transform:scaleX(1.0009);color:#0000ff;">Data da Programação</span>
<span class="t g" style="left:18.50px;top:423.70px;transform:scaleX(0.8912);">05/07/2022</span>
<span class="t g" style="left:199.80px;top:423.70px;transform:scaleX(0.8325);"><u>I</u>ncluir Seleção</span>
<span class="t b" style="left:10.50px;top:454.03px;transform:scaleX(1.0372);">Programação 2 / 2022</span>
<span class="t b" style="left:29.30px;top:473.03px;transform:scaleX(1.0364);">Salva</span>
<span class="t b" style="left:79.20px;top:473.03px;transform:scaleX(0.9430);">Impressa</span>
<span class="t b" style="left:140.00px;top:473.03px;transform:scaleX(1.0202);">O.S.</span>
<span class="t b" style="left:204.50px;top:473.03px;transform:scaleX(1.0074);">Ano</span>
<span class="t b" style="left:270.00px;top:473.03px;transform:scaleX(0.9739);">Programação</span>
<span class="t b" style="left:348.25px;top:473.03px;transform:scaleX(1.0074);">Ano</span>
<span class="t b" style="left:441.00px;top:473.03px;transform:scaleX(1.0571);">Data</span>
<span class="t b" style="left:500.00px;top:473.03px;transform:scaleX(0.9717);">Processo</span>
<span class="t b" style="left:592.00px;top:473.03px;transform:scaleX(0.9630);">Proprietário</span>
<span class="t b" style="left:793.25px;top:473.03px;transform:scaleX(0.9580);">Logradouro</span>
<span class="t b" style="left:1044.00px;top:473.03px;transform:scaleX(1.0175);">Cód. Seção</span>
<span class="t b" style="left:1123.25px;top:473.03px;transform:scaleX(1.0181);">Seção</span>
<span class="t g" style="left:181.70px;top:492.20px;transform:scaleX(0.8432);">406</span>
<span class="t g" style="left:240.00px;top:492.20px;transform:scaleX(0.8471);">2022</span>
<span class="t g" style="left:337.00px;top:492.20px;transform:scaleX(0.8985);">2</span>
<span class="t g" style="left:384.00px;top:492.20px;transform:scaleX(0.8471);">2022</span>
<span class="t g" style="left:425.25px;top:492.20px;transform:scaleX(0.8989);">05/07/2022</span>
<span class="t g" style="left:568.20px;top:492.20px;transform:scaleX(0.8432);">234</span>
<span class="t g" style="left:591.50px;top:492.20px;transform:scaleX(0.8423);">MARIA NILZA NASCIMENTO DA SILVA</span>
<span class="t g" style="left:793.25px;top:492.20px;transform:scaleX(0.8369);">RUA 13 DE MAIO, sn</span>
<span class="t g" style="left:1110.00px;top:492.20px;transform:scaleX(0.8985);">0</span>
<div class="a" style="left:1121px;top:491px;width:72px;height:18px;overflow:hidden"><span class="t g" style="left:2.25px;top:1.20px;transform:scaleX(0.8096);">NÃO IDENTIFICADO</span></div>
<span class="t g" style="left:181.70px;top:511.20px;transform:scaleX(0.8432);">408</span>
<span class="t g" style="left:240.00px;top:511.20px;transform:scaleX(0.8471);">2022</span>
<span class="t g" style="left:337.00px;top:511.20px;transform:scaleX(0.8985);">2</span>
<span class="t g" style="left:384.00px;top:511.20px;transform:scaleX(0.8471);">2022</span>
<span class="t g" style="left:425.25px;top:511.20px;transform:scaleX(0.8989);">05/07/2022</span>
<span class="t g" style="left:568.20px;top:511.20px;transform:scaleX(0.8432);">402</span>
<span class="t g" style="left:591.50px;top:511.20px;transform:scaleX(0.8373);">EDSON O. DE SANTANA</span>
<span class="t g" style="left:793.25px;top:511.20px;transform:scaleX(0.8407);">RUA ARAGUAIA, sn</span>
<span class="t g" style="left:1110.00px;top:511.20px;transform:scaleX(0.8985);">0</span>
<div class="a" style="left:1121px;top:510px;width:72px;height:18px;overflow:hidden"><span class="t g" style="left:2.25px;top:1.20px;transform:scaleX(0.8096);">NÃO IDENTIFICADO</span></div>
<span class="t g" style="left:181.70px;top:530.20px;transform:scaleX(0.8432);">409</span>
<span class="t g" style="left:240.00px;top:530.20px;transform:scaleX(0.8471);">2022</span>
<span class="t g" style="left:337.00px;top:530.20px;transform:scaleX(0.8985);">2</span>
<span class="t g" style="left:384.00px;top:530.20px;transform:scaleX(0.8471);">2022</span>
<span class="t g" style="left:425.25px;top:530.20px;transform:scaleX(0.8989);">05/07/2022</span>
<span class="t g" style="left:562.00px;top:530.20px;transform:scaleX(0.8471);">1431</span>
<span class="t g" style="left:591.50px;top:530.20px;transform:scaleX(0.8508);">ANTONIA PEREIRA DA SILVA</span>
<span class="t g" style="left:793.25px;top:530.20px;transform:scaleX(0.8271);">RUA PARAIBA, sn - RESIDENCIAL</span>
<span class="t g" style="left:1110.00px;top:530.20px;transform:scaleX(0.8985);">0</span>
<div class="a" style="left:1121px;top:529px;width:72px;height:18px;overflow:hidden"><span class="t g" style="left:2.25px;top:1.20px;transform:scaleX(0.8096);">NÃO IDENTIFICADO</span></div>
<span class="t g" style="left:181.70px;top:549.20px;transform:scaleX(0.8432);">412</span>
<span class="t g" style="left:240.00px;top:549.20px;transform:scaleX(0.8471);">2022</span>
<span class="t g" style="left:337.00px;top:549.20px;transform:scaleX(0.8985);">2</span>
<span class="t g" style="left:384.00px;top:549.20px;transform:scaleX(0.8471);">2022</span>
<span class="t g" style="left:425.25px;top:549.20px;transform:scaleX(0.8989);">05/07/2022</span>
<span class="t g" style="left:562.00px;top:549.20px;transform:scaleX(0.8471);">2083</span>
<span class="t g" style="left:591.50px;top:549.20px;transform:scaleX(0.8422);">VALDEIR RODRIGUES DA SILVA</span>
<span class="t g" style="left:793.25px;top:549.20px;transform:scaleX(0.8471);">RUA IMPERATRIZ, SN</span>
<span class="t g" style="left:1110.00px;top:549.20px;transform:scaleX(0.8985);">0</span>
<div class="a" style="left:1121px;top:548px;width:72px;height:18px;overflow:hidden"><span class="t g" style="left:2.25px;top:1.20px;transform:scaleX(0.8096);">NÃO IDENTIFICADO</span></div>
<span class="t g" style="left:181.70px;top:568.20px;transform:scaleX(0.8432);">413</span>
<span class="t g" style="left:240.00px;top:568.20px;transform:scaleX(0.8471);">2022</span>
<span class="t g" style="left:337.00px;top:568.20px;transform:scaleX(0.8985);">2</span>
<span class="t g" style="left:384.00px;top:568.20px;transform:scaleX(0.8471);">2022</span>
<span class="t g" style="left:425.25px;top:568.20px;transform:scaleX(0.8989);">05/07/2022</span>
<span class="t g" style="left:562.00px;top:568.20px;transform:scaleX(0.8471);">2030</span>
<span class="t g" style="left:591.50px;top:568.20px;transform:scaleX(0.8133);">MANOEL CONCEIÇAO DE MORAIS</span>
<span class="t g" style="left:793.25px;top:568.20px;transform:scaleX(0.8365);">RUA TIRADENTE, SN -  BAIRRO VILA DO GATO</span>
<span class="t g" style="left:1110.00px;top:568.20px;transform:scaleX(0.8985);">0</span>
<div class="a" style="left:1121px;top:567px;width:72px;height:18px;overflow:hidden"><span class="t g" style="left:2.25px;top:1.20px;transform:scaleX(0.8096);">NÃO IDENTIFICADO</span></div>
<span class="t T" style="left:4.70px;top:620.37px;transform:scaleX(1.0769);color:#ff0000;">Total: 6</span>
<span class="t b" style="left:59.10px;top:650.03px;transform:scaleX(1.0047);color:#0000ff;">S<u>a</u>lvar</span>
<span class="t b" style="left:167.00px;top:649.03px;transform:scaleX(1.0530);color:#0000ff;"><u>N</u>ova</span>
<span class="t b" style="left:254.10px;top:650.03px;transform:scaleX(0.9887);color:#0000ff;"><u>E</u>xcluir O.S.</span>
<span class="t b" style="left:371.60px;top:650.03px;transform:scaleX(0.8955);color:#0000ff;">I<u>m</u>primir</span>
<span class="t b" style="left:485.70px;top:650.03px;transform:scaleX(1.0050);color:#0000ff;"><u>S</u>air</span>
</body></html>
